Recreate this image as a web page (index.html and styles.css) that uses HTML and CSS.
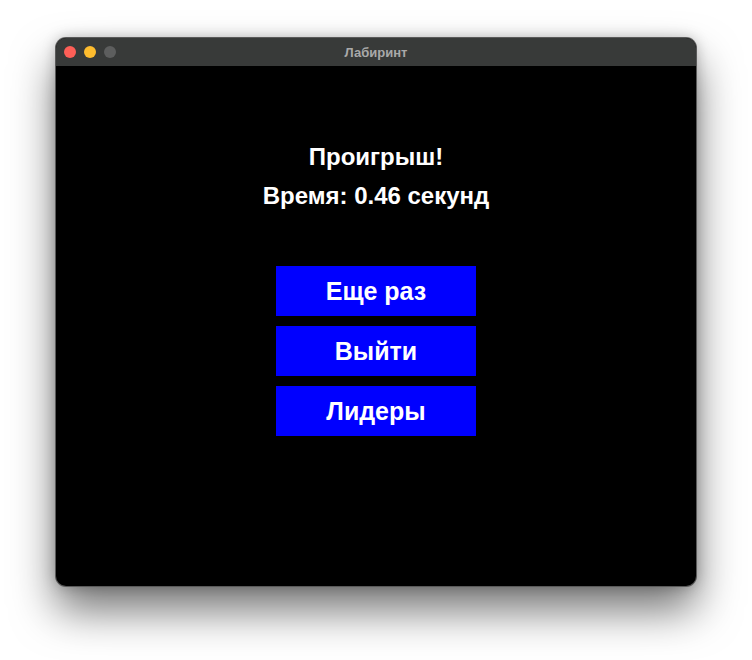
FILE: index.html
```html
<!DOCTYPE html>
<html lang="ru">
<head>
<meta charset="utf-8">
<title>Лабиринт</title>
<link rel="stylesheet" href="styles.css">
</head>
<body>
<div class="window">
  <div class="titlebar">
    <div class="lights">
      <span class="light red"></span>
      <span class="light yellow"></span>
      <span class="light grey"></span>
    </div>
    <div class="title">Лабиринт</div>
  </div>
  <div class="content">
    <div class="heading">Проигрыш!</div>
    <div class="time">Время: 0.46 секунд</div>
    <div class="buttons">
      <div class="btn">Еще раз</div>
      <div class="btn">Выйти</div>
      <div class="btn">Лидеры</div>
    </div>
  </div>
</div>
</body>
</html>
```
FILE: styles.css
```css
html, body {
  margin: 0;
  padding: 0;
  background: #ffffff;
}
html {
  min-height: 660px;
}
body {
  min-height: 660px;
  box-sizing: border-box;
  padding: 38px 0 0 56px;
  font-family: "Liberation Sans", Arial, sans-serif;
}
.window {
  width: 640px;
  height: 548px;
  border-radius: 10px;
  overflow: hidden;
  background: #000;
  box-shadow: 0 0 0 1px #5a5a5a, 0 24px 44px rgba(0,0,0,0.55), 0 0 14px rgba(0,0,0,0.25);
  display: flex;
  flex-direction: column;
}
.titlebar {
  height: 28px;
  background: #383a39;
  display: flex;
  align-items: center;
  position: relative;
}
.lights {
  display: flex;
  gap: 8px;
  padding-left: 8px;
}
.light {
  width: 12px;
  height: 12px;
  border-radius: 50%;
  display: block;
}
.red { background: #fe5f57; }
.yellow { background: #febc2e; }
.grey { background: #5d5e5e; }
.title {
  position: absolute;
  left: 0;
  right: 0;
  text-align: center;
  color: #a9a9a9;
  font-size: 13px;
  font-weight: bold;
  pointer-events: none;
}
.content {
  flex: 1;
  display: flex;
  flex-direction: column;
  align-items: center;
  color: #fff;
  font-weight: bold;
}
.heading {
  font-size: 24px;
  margin-top: 77px;
  line-height: 28px;
}
.time {
  font-size: 24px;
  margin-top: 11px;
  line-height: 28px;
}
.buttons {
  margin-top: 56px;
  display: flex;
  flex-direction: column;
  gap: 10px;
}
.btn {
  width: 200px;
  height: 50px;
  background: #0000ff;
  display: flex;
  align-items: center;
  justify-content: center;
  font-size: 25px;
}
```
